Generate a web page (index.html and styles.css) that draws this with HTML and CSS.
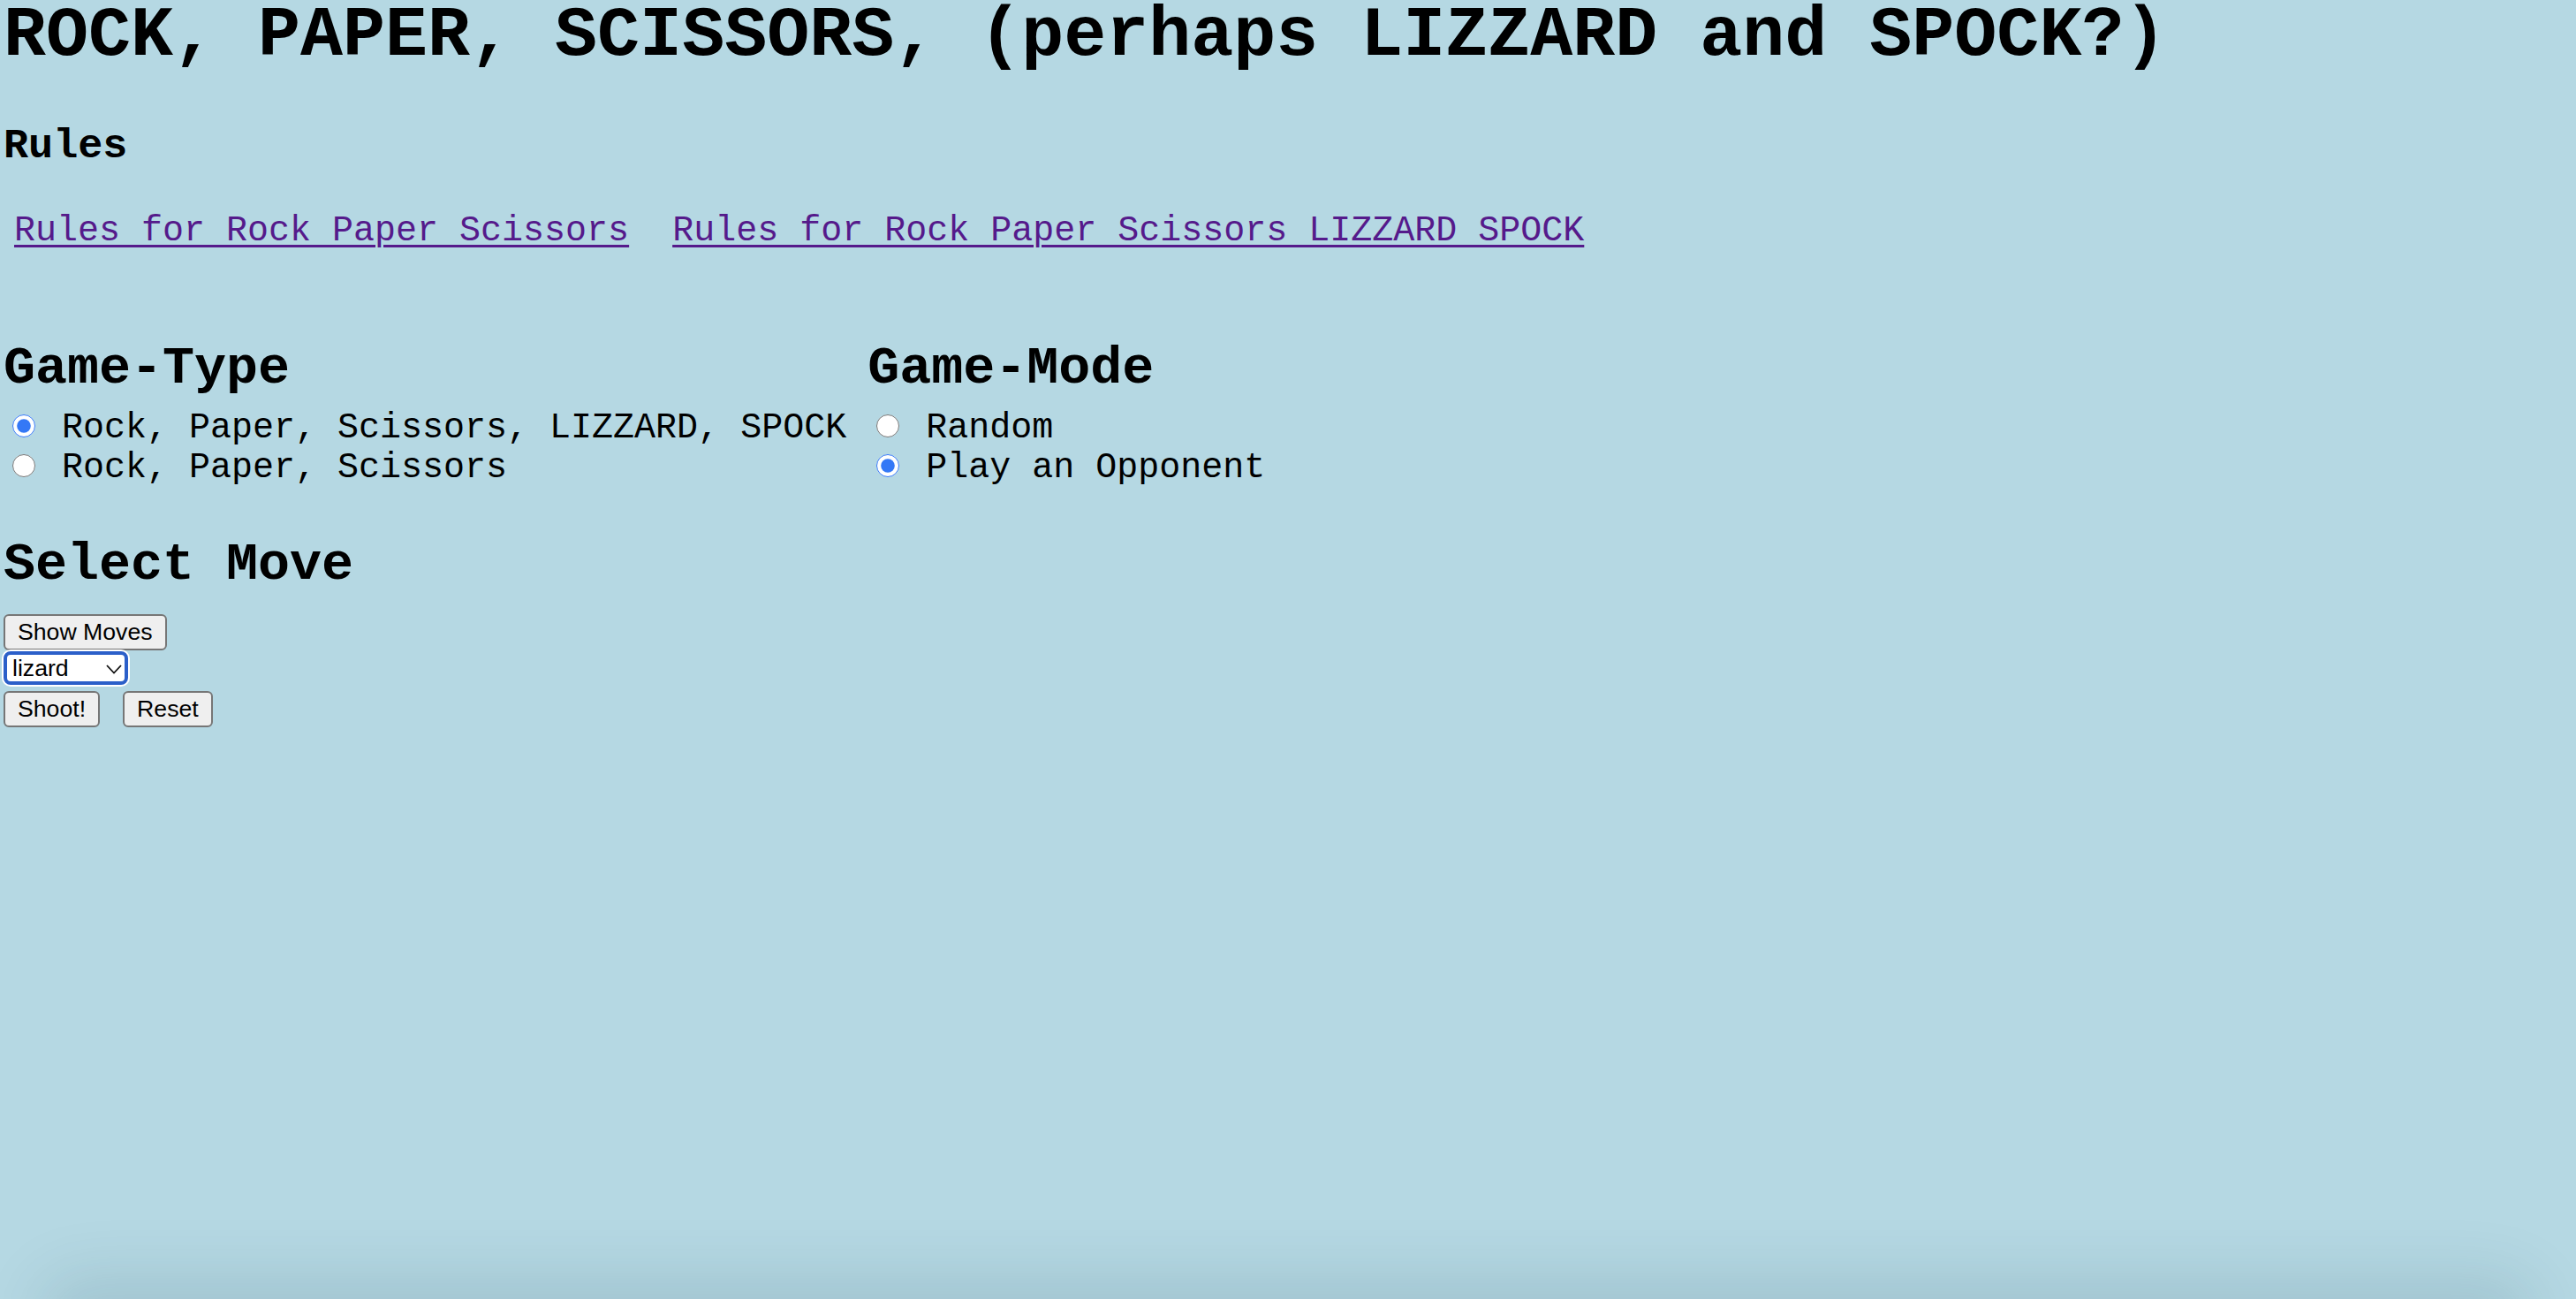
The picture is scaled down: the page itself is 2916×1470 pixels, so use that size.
FILE: index.html
```html
<!DOCTYPE html>
<html lang="en">
<head>
<meta charset="utf-8">
<title>Rock Paper Scissors</title>
<link rel="stylesheet" href="styles.css">
</head>
<body>
<h1 class="title">ROCK, PAPER, SCISSORS, (perhaps LIZZARD and SPOCK?)</h1>
<h3 class="rules-heading">Rules</h3>
<div class="rules-links">
  <a class="rule-link" href="#rps">Rules for Rock Paper Scissors</a>
  <a class="rule-link" href="#rpsls">Rules for Rock Paper Scissors LIZZARD SPOCK</a>
</div>
<div class="options">
  <div class="option-group">
    <h2 class="section-title">Game-Type</h2>
    <div class="option-row"><input class="radio" type="radio" name="type" checked> Rock, Paper, Scissors, LIZZARD, SPOCK</div>
    <div class="option-row"><input class="radio" type="radio" name="type"> Rock, Paper, Scissors</div>
  </div>
  <div class="option-group">
    <h2 class="section-title">Game-Mode</h2>
    <div class="option-row"><input class="radio" type="radio" name="mode"> Random</div>
    <div class="option-row"><input class="radio" type="radio" name="mode" checked> Play an Opponent</div>
  </div>
</div>
<h2 class="section-title move-title">Select Move</h2>
<div class="controls">
  <button class="btn">Show Moves</button>
  <span class="select-wrap">
    <select class="move-select">
      <option>rock</option>
      <option>paper</option>
      <option>scissors</option>
      <option selected>lizard</option>
      <option>spock</option>
    </select>
    <svg class="chevron" width="18" height="11" viewBox="0 0 18 11"><path d="M1 1 L9 9.5 L17 1" fill="none" stroke="#111" stroke-width="1.8"/></svg>
  </span>
  <div class="btn-row">
    <button class="btn">Shoot!</button>
    <button class="btn">Reset</button>
  </div>
</div>
<div class="bottom-shade"></div>
</body>
</html>
```

FILE: styles.css
```css
html, body {
  height: 100%;
}
body {
  margin: 0;
  padding: 0 4px;
  background: #b5d8e3;
  color: #000;
  font-family: "Liberation Mono", "Courier New", monospace;
  font-size: 40px;
  overflow: hidden;
}
.title {
  font-size: 80px;
  font-weight: bold;
  line-height: normal;
  margin: -5px 0 0;
  white-space: nowrap;
}
.rules-heading {
  font-size: 46.8px;
  font-weight: bold;
  margin: 53px 0 0;
  line-height: normal;
}
.rules-links {
  display: flex;
  gap: 49px;
  padding-left: 12px;
  margin-top: 47px;
}
.rule-link {
  color: #551a8b;
  text-decoration: underline;
  text-decoration-thickness: 3px;
  text-underline-offset: 5px;
}
.options {
  display: flex;
  gap: 24px;
  margin-top: 99px;
}
.section-title {
  font-size: 60px;
  font-weight: bold;
  line-height: normal;
  margin: 0 0 11px;
}
.option-row {
  white-space: pre;
  line-height: normal;
}
.radio {
  width: 26px;
  height: 26px;
  margin: 6px 6px 0 10px;
  accent-color: #3478f6;
  vertical-align: baseline;
}
.move-title {
  margin: 53px 0 0;
}
.controls {
  display: flex;
  flex-direction: column;
  align-items: flex-start;
  margin-top: 22px;
}
.btn {
  font-family: "Liberation Sans", Arial, sans-serif;
  font-size: 26.67px;
  line-height: normal;
  height: 41px;
  padding: 0 14px;
  color: #000;
  background: #efefef;
  border: 2px solid #767676;
  border-radius: 6px;
}
.select-wrap {
  position: relative;
  display: flex;
  line-height: 0;
  margin-top: 1px;
}
.move-select {
  appearance: none;
  -webkit-appearance: none;
  width: 141px;
  height: 38px;
  box-sizing: border-box;
  padding: 0 0 0 6px;
  font-family: "Liberation Sans", Arial, sans-serif;
  font-size: 26.67px;
  line-height: normal;
  color: #000;
  background: #fff;
  border: 4px solid #2b5fc9;
  border-radius: 8px;
  box-shadow: 0 0 0 2px #fff;
  outline: none;
}
.chevron {
  position: absolute;
  left: 116px;
  top: 15px;
  pointer-events: none;
}
.btn-row {
  display: flex;
  gap: 26px;
  margin-top: 7px;
}
.bottom-shade {
  position: fixed;
  left: 70px;
  right: 70px;
  bottom: -40px;
  height: 40px;
  border-radius: 40px;
  box-shadow: 0 0 70px 25px rgba(20, 60, 80, 0.13);
  pointer-events: none;
}
```
